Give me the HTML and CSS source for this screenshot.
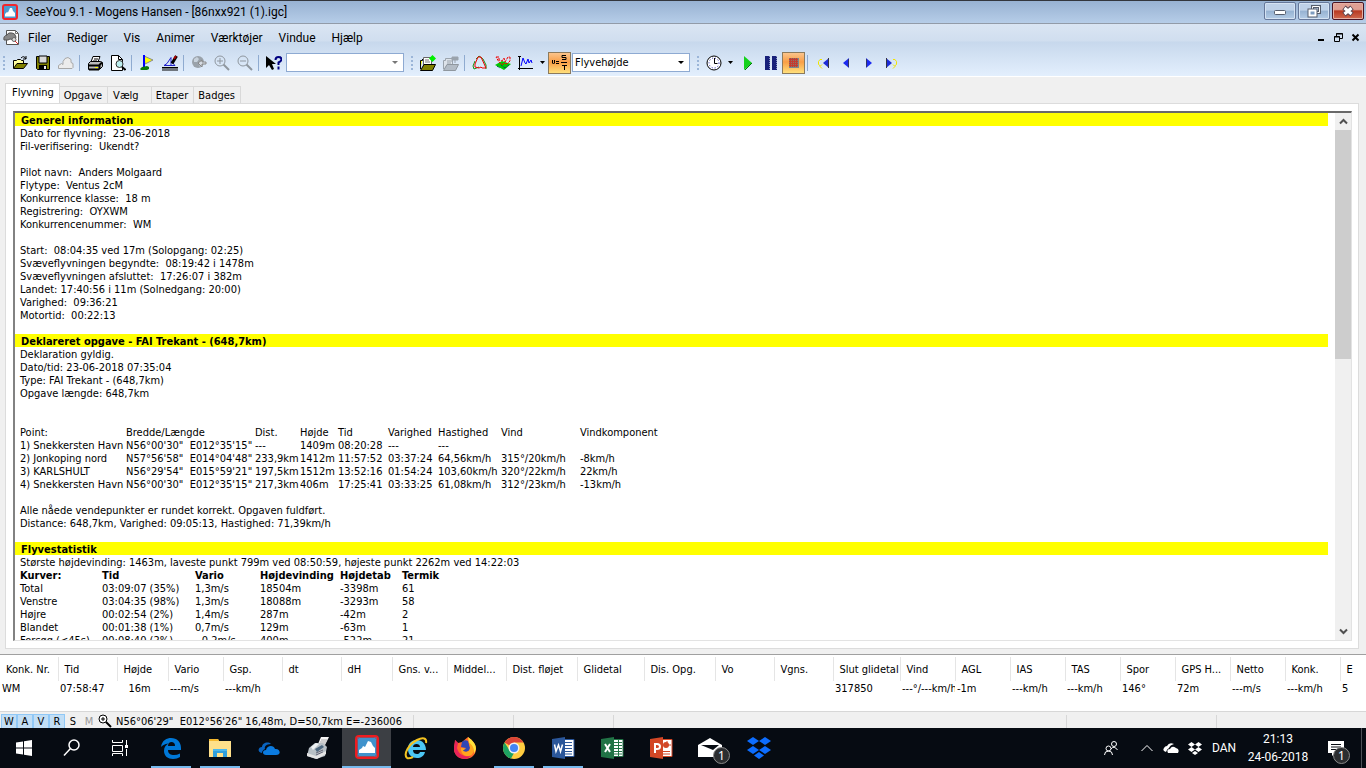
FILE: index.html
```html
<!DOCTYPE html>
<html lang="da">
  <head>
    <meta charset="utf-8">
    <title>SeeYou 9.1 - Mogens Hansen - [86nxx921 (1).igc]</title>
    <link rel="stylesheet" href="styles.css">
  </head>
  <body>
    <header class="titlebar">
      <svg class="app-icon" viewBox="0 0 16 16"><rect x="1" y="1" width="14" height="14" rx="2" fill="#4b9bd0" stroke="#f2262c" stroke-width="2"/><path d="M3 12.500V10l2-2 1 .5L8 4h2l1 3 2 2v3.500z" fill="#fff"/></svg>
      <h1>SeeYou 9.1 - Mogens Hansen - [86nxx921 (1).igc]</h1>
      <div class="win-buttons">
        <button aria-label="Minimer"><svg viewBox="0 0 30 16"><rect x="9.500" y="7.500" width="11" height="4" rx="1" fill="#fff" stroke="#555d6c"/></svg></button>
        <button aria-label="Gendan"><svg viewBox="0 0 30 16"><path d="M13.500 3.500h7v6h-7z" fill="none" stroke="#555d6c" stroke-width="3"/><path d="M13.500 3.500h7v6h-7z" fill="none" stroke="#fff"/><path d="M10.500 7.500h6v5h-6z" fill="#7d9cc0" stroke="#555d6c" stroke-width="4"/><path d="M10.500 7.500h6v5h-6z" fill="#7d9cc0" stroke="#fff" stroke-width="2"/></svg></button>
        <button class="close" aria-label="Luk"><svg viewBox="0 0 30 16"><path d="M11 4.500l8 7m0-7l-8 7" stroke="#5b4650" stroke-width="5"/><path d="M11.500 5l7 6m0-6l-7 6" stroke="#fff" stroke-width="3"/></svg></button>
      </div>
    </header>

    <div class="bars">
      <nav class="menubar">
        <svg class="doc-icon" viewBox="0 0 17 17"><path d="M3.500 1.500h9l3 3v11h-12z" fill="#fff" stroke="#555"/><path d="M12.500 1.500v3h3" fill="none" stroke="#777"/><path d="M1 11q-1-4 3-5 1-3 5-2 3 0 4 4l-1 3-5-1-2 1z" fill="#888" stroke="#555"/><circle cx="11" cy="10.500" r="2" fill="#ddd" stroke="#666"/><path d="M12 12l3 3" stroke="#d22" stroke-width="1"/></svg>
        <a href="#">Filer</a><a href="#">Rediger</a><a href="#">Vis</a><a href="#">Animer</a><a href="#">Værktøjer</a><a href="#">Vindue</a><a href="#">Hjælp</a>
        <div class="mdi-buttons">
          <button aria-label="Minimer dokument"><svg viewBox="0 0 9 9"><path d="M1 7h6" stroke="#000" stroke-width="2"/></svg></button>
          <button aria-label="Gendan dokument"><svg viewBox="0 0 9 9"><path d="M2.500 3V.500h6v5H6M2 1h7M.500 3.500h5v5h-5zM0 4h6" fill="none" stroke="#000"/></svg></button>
          <button aria-label="Luk dokument"><svg viewBox="0 0 9 9"><path d="M1.500 1.500l6 6m0-6l-6 6" stroke="#000" stroke-width="2"/></svg></button>
        </div>
      </nav>

      <div class="toolbar">
        <div class="group">
          <span class="grip"></span>
          <button aria-label="Åbn"><svg viewBox="0 0 16 16"><path d="M1.500 13V5.500h3l1-1h3l1 1h2V8" fill="#ffffa0" stroke="#000"/><path d="M1.500 13.500L5 8.500h10.500l-4 5z" fill="#808000" stroke="#000"/><path d="M9 3q3-3 5 1m0-3v3h-3" fill="none" stroke="#000"/></svg></button>
          <button aria-label="Gem"><svg viewBox="0 0 16 16"><path d="M1.500 1.500h13v13H2.500l-1-1z" fill="#808000" stroke="#000"/><path d="M4 1h8v7H4z" fill="#d8d8d8" stroke="#000"/><path d="M4 10h8v5H4z" fill="#000"/><path d="M9 11h2v3H9z" fill="#eee"/></svg></button>
          <button aria-label="Hent fra sky"><svg viewBox="0 0 16 16"><path d="M.500 13.500v-3l3-2 1.500 1V6.500l2-3 3-1 3 2v3l2 1v4l-1 1z" fill="#ececec" stroke="#a8a8a8"/></svg></button>
          <i class="sep"></i>
          <button aria-label="Udskriv"><svg viewBox="0 0 16 16"><path d="M4 7l2-5.500h7L11 7" fill="#fff" stroke="#000"/><path d="M7 4h4M6 6h4" stroke="#000"/><path d="M1.500 8.500l2-2h10l2 1v4l-3 3h-11z" fill="#bbb" stroke="#000"/><path d="M1 10.500h11l3-3M2 14.500h10M12.500 10v4" fill="none" stroke="#000" stroke-width="2"/><path d="M8 12.500h3" stroke="#ff0"/></svg></button>
          <button aria-label="Vis udskrift"><svg viewBox="0 0 16 16"><path d="M1.500 .500h7l4 4v11h-11z" fill="#fff" stroke="#000"/><path d="M8.500 .500v4h4" fill="none" stroke="#000"/><circle cx="9.500" cy="9" r="3.500" fill="#bdeff0" stroke="#333"/><path d="M12 12l3.500 3" stroke="#000" stroke-width="2"/></svg></button>
          <i class="sep"></i>
          <button aria-label="Flag"><svg viewBox="0 0 16 16"><path d="M5 1l9 4-8 4z" fill="#ff0" stroke="#888"/><path d="M5 0v13" stroke="#00f" stroke-width="2"/><path d="M1 14l2-2 5-1 2 1v2l-2 1H2z" fill="#0a7a0a"/></svg></button>
          <button aria-label="Rediger opgave"><svg viewBox="0 0 16 16"><path d="M0 12.500h16" stroke="#000" stroke-width="1"/><path d="M.500 14.500h16" stroke="#000" stroke-dasharray="1 1" stroke-width="3"/><path d="M2 10.500l3-2 4-6v8zM2 10.500h11L9 6" fill="none" stroke="#22c"/><path d="M14.500 1L10 8.500" stroke="#000" stroke-width="3"/><path d="M14 1l-2 3" stroke="#a00" stroke-width="2"/></svg></button>
          <i class="sep"></i>
          <button aria-label="Globus"><svg viewBox="0 0 16 16"><circle cx="7" cy="7" r="6" fill="#9aa2aa"/><path d="M3 4l3-2 2 2-2 3H3zM8 9h3l-2 3z" fill="#c8d2dc"/><path d="M7 8l4-3v2h4v2h-4v3z" fill="#d6dce4" stroke="#888"/></svg></button>
          <button aria-label="Zoom ind"><svg viewBox="0 0 16 16"><circle cx="6" cy="6" r="5" fill="none" stroke="#8f979f"/><path d="M3 6h6M6 3v6" stroke="#8f979f"/><path d="M9.500 9.500L15 15" stroke="#8f979f" stroke-width="2"/></svg></button>
          <button aria-label="Zoom ud"><svg viewBox="0 0 16 16"><circle cx="6" cy="6" r="5" fill="none" stroke="#8f979f"/><path d="M3 6h6" stroke="#8f979f"/><path d="M9.500 9.500L15 15" stroke="#8f979f" stroke-width="2"/></svg></button>
          <i class="sep"></i>
          <button aria-label="Hjælp"><svg viewBox="0 0 16 16"><path d="M0 1v12l3-3 3 5 2-1-2-5h4z" fill="#000"/><path d="M9.500 5q0-3 3-3 3 0 3 2.500 0 1.500-3 3v2.500M12.500 11.500v3" fill="none" stroke="#000080" stroke-width="2"/></svg></button>
          <span class="combo off"><select aria-label="Vis"><option></option></select></span>
        </div>
        <div class="group">
          <span class="grip"></span>
          <button aria-label="Tilføj flyvning"><svg viewBox="0 0 16 16"><path d="M.500 14V5.500h2V4" fill="#ff0" stroke="#000"/><path d="M3.500 2.500h8v8h-8z" fill="#fff" stroke="#666"/><path d="M5 5h4M5 7h5" stroke="#777"/><path d="M.500 15.500L4 9.500h11.500l-3 6z" fill="#808000" stroke="#000"/><path d="M12.500 0l3.500 3.500-3.500 3.500L9 3.500z" fill="#00f000"/></svg></button>
          <button aria-label="Fjern flyvning"><svg viewBox="0 0 16 16"><path d="M.500 14V5.500h2V3.500h7v6" fill="#dde3ea" stroke="#9aa3ad"/><path d="M9 2h6v3H9zM12 5v3M4 6h5M4 8h4" fill="#9aa3ad" stroke="#9aa3ad"/><path d="M.500 15.500L4 9.500h11.500l-3 6z" fill="#b3bcc6" stroke="#8f979f"/></svg></button>
          <i class="sep"></i>
          <button aria-label="Rute"><svg viewBox="0 0 16 16"><path d="M4 4l3-3 4 3 3 6v4M3 6l-2 5 1 3 5-2" fill="none" stroke="#159015"/><path d="M6 2h3l5 11h-4l-1-1-2 1-4-1V9z" fill="none" stroke="#e00"/></svg></button>
          <button aria-label="3D"><svg viewBox="0 0 16 16"><path d="M0 10l7-4 9 3-7 6z" fill="#00c800"/><path d="M2 11l3 2M6 10l4 3M10 13l4-3" stroke="#055" stroke-dasharray="2 1"/><path d="M1 2h3v3l3 1 2-3 1 4 3-5h2v4l-3 3-3-1-2 2-3-3z" fill="none" stroke="#e00" stroke-dasharray="3 1"/></svg></button>
          <button aria-label="Graf"><svg viewBox="0 0 16 16"><path d="M1.500 1v14M0 13.500h15M0 1.500h3" stroke="#000"/><path d="M3 11l2-8 2 5 1 1 2-5 1 4 2-3 1 3" fill="none" stroke="#00f"/></svg></button>
          <button class="drop" aria-label="Flere grafer"><svg viewBox="0 0 7 4"><path d="M1 0h5L3.500 3z"/></svg></button>
          <button class="pressed" aria-label="Statistik"><svg viewBox="0 0 16 16"><path d="M.500 5v3l1 1 1-1V5M4 6.500h3M4 8.500h3M14 .500h-4v2h4v2h-4M9 7.500h6M10 10.500h5M12.500 10v5" fill="none" stroke="#000"/></svg></button>
          <span class="combo"><select aria-label="Farve"><option>Flyvehøjde</option></select></span>
        </div>
        <div class="group">
          <span class="grip"></span>
          <button aria-label="Tid"><svg viewBox="0 0 16 16"><circle cx="8" cy="8" r="7" fill="#fff" stroke="#000"/><circle cx="8" cy="8" r="5" fill="none" stroke="#22a" stroke-dasharray="1 2"/><path d="M8.500 3v5.500h3" fill="none" stroke="#000"/></svg></button>
          <button class="drop" aria-label="Hastighed"><svg viewBox="0 0 7 4"><path d="M1 0h5L3.500 3z"/></svg></button>
          <button aria-label="Afspil"><svg viewBox="0 0 16 16"><path d="M4 1l8 7-8 7z" fill="#14d21c"/><path d="M5 15l7-7" stroke="#087010"/></svg></button>
          <button aria-label="Pause"><svg viewBox="0 0 16 16"><path d="M2 1h5v14H2zM9 1h5v14H9z" fill="#17207a"/><path d="M6.500 1v14M13.500 1v14" stroke="#8490c0" stroke-dasharray="1 1"/></svg></button>
          <button class="pressed" aria-label="Stop"><svg viewBox="0 0 16 16"><path d="M3 3h10v10H3z" fill="#7d8890"/><path d="M3 3h9v9H3z" fill="#c43a30"/><path d="M3 3.500h9M3 5.500h9M3 7.500h9M3 9.500h9M3 11.500h9" stroke="#8c7468" stroke-dasharray="1 1"/></svg></button>
          <i class="sep"></i>
          <button aria-label="Første"><svg viewBox="0 0 16 16"><path d="M14 3v10L8 8z" fill="#1c2bd8"/><path d="M13.500 3v10" stroke="#334"/><path d="M7 4.500H5l-1.500 2v3l2 1.500M7 9.500l-2 2 2 2" fill="none" stroke="#f0e400"/></svg></button>
          <button aria-label="Forrige"><svg viewBox="0 0 16 16"><path d="M11 3v10L5 8z" fill="#1c2bf0"/><path d="M10.500 4v8" stroke="#336"/></svg></button>
          <button aria-label="Næste"><svg viewBox="0 0 16 16"><path d="M5 3v10l6-5z" fill="#1c2bf0"/><path d="M5.500 4v8" stroke="#336"/></svg></button>
          <button aria-label="Sidste"><svg viewBox="0 0 16 16"><path d="M2 3v10l6-5z" fill="#1c2bd8"/><path d="M2.500 3v10" stroke="#334"/><path d="M9 4.500h2l1.500 2v3l-2 1.500M9 9.500l2 2-2 2" fill="none" stroke="#f0e400"/></svg></button>
        </div>
      </div>
    </div>

    <main>
      <div class="tabs" role="tablist">
        <button role="tab" class="active" aria-selected="true">Flyvning</button><button role="tab">Opgave</button><button role="tab" class="wide">Vælg</button><button role="tab">Etaper</button><button role="tab">Badges</button>
      </div>
      <section class="page">
        <div class="frame">
          <article class="report">
            <h2>Generel information</h2>
            <p>Dato for flyvning:  23-06-2018
Fil-verifisering:  Ukendt?

Pilot navn:  Anders Molgaard
Flytype:  Ventus 2cM
Konkurrence klasse:  18 m
Registrering:  OYXWM
Konkurrencenummer:  WM

Start:  08:04:35 ved 17m (Solopgang: 02:25)
Svæveflyvningen begyndte:  08:19:42 i 1478m
Svæveflyvningen afsluttet:  17:26:07 i 382m
Landet: 17:40:56 i 11m (Solnedgang: 20:00)
Varighed:  09:36:21
Motortid:  00:22:13</p>
            <h2>Deklareret opgave - FAI Trekant - (648,7km)</h2>
            <p>Deklaration gyldig.
Dato/tid: 23-06-2018 07:35:04
Type: FAI Trekant - (648,7km)
Opgave længde: 648,7km</p>
            <table class="points">
              <colgroup><col class="c106"><col class="c129"><col class="c45"><col class="c38"><col class="c50"><col class="c50"><col class="c63"><col class="c79"><col class="c106"></colgroup>
              <thead>
                <tr><th>Point:</th><th>Bredde/Længde</th><th>Dist.</th><th>Højde</th><th>Tid</th><th>Varighed</th><th>Hastighed</th><th>Vind</th><th>Vindkomponent</th></tr>
              </thead>
              <tbody>
                <tr><td>1) Snekkersten Havn</td><td>N56°00'30"  E012°35'15"</td><td>---</td><td>1409m</td><td>08:20:28</td><td>---</td><td>---</td><td></td><td></td></tr>
                <tr><td>2) Jonkoping nord</td><td>N57°56'58"  E014°04'48"</td><td>233,9km</td><td>1412m</td><td>11:57:52</td><td>03:37:24</td><td>64,56km/h</td><td>315°/20km/h</td><td>-8km/h</td></tr>
                <tr><td>3) KARLSHULT</td><td>N56°29'54"  E015°59'21"</td><td>197,5km</td><td>1512m</td><td>13:52:16</td><td>01:54:24</td><td>103,60km/h</td><td>320°/22km/h</td><td>22km/h</td></tr>
                <tr><td>4) Snekkersten Havn</td><td>N56°00'30"  E012°35'15"</td><td>217,3km</td><td>406m</td><td>17:25:41</td><td>03:33:25</td><td>61,08km/h</td><td>312°/23km/h</td><td>-13km/h</td></tr>
              </tbody>
            </table>
            <p>Alle nåede vendepunkter er rundet korrekt. Opgaven fuldført.
Distance: 648,7km, Varighed: 09:05:13, Hastighed: 71,39km/h</p>
            <h2>Flyvestatistik</h2>
            <p class="tight">Største højdevinding: 1463m, laveste punkt 799m ved 08:50:59, højeste punkt 2262m ved 14:22:03</p>
            <table class="stats">
              <colgroup><col class="c82"><col class="c93"><col class="c65"><col class="c80"><col class="c62"><col class="c62"></colgroup>
              <thead>
                <tr><th>Kurver:</th><th>Tid</th><th>Vario</th><th>Højdevinding</th><th>Højdetab</th><th>Termik</th></tr>
              </thead>
              <tbody>
                <tr><td>Total</td><td>03:09:07 (35%)</td><td>1,3m/s</td><td>18504m</td><td>-3398m</td><td>61</td></tr>
                <tr><td>Venstre</td><td>03:04:35 (98%)</td><td>1,3m/s</td><td>18088m</td><td>-3293m</td><td>58</td></tr>
                <tr><td>Højre</td><td>00:02:54 (2%)</td><td>1,4m/s</td><td>287m</td><td>-42m</td><td>2</td></tr>
                <tr><td>Blandet</td><td>00:01:38 (1%)</td><td>0,7m/s</td><td>129m</td><td>-63m</td><td>1</td></tr>
                <tr><td>Forsøg (&lt;45s)</td><td>00:08:40 (2%)</td><td> -0,2m/s</td><td>400m</td><td>-522m</td><td>21</td></tr>
              </tbody>
            </table>
          </article>
          <div class="scroll">
            <button aria-label="Rul op"><svg viewBox="0 0 9 7"><path d="M1 5.500l3.500-3.500L8 5.500" fill="none" stroke="#505050" stroke-width="2"/></svg></button>
            <div class="thumb"></div>
            <button aria-label="Rul ned"><svg viewBox="0 0 9 7"><path d="M1 1.500L4.500 5 8 1.500" fill="none" stroke="#505050" stroke-width="2"/></svg></button>
          </div>
        </div>
      </section>
    </main>

    <section class="pilots">
      <table>
        <colgroup><col class="c58"><col class="c59"><col class="c51"><col class="c55"><col class="c59"><col class="c59"><col class="c51"><col class="c55"><col class="c59"><col class="c71"><col class="c67"><col class="c71"><col class="c59"><col class="c59"><col class="c67"><col class="c55"><col class="c55"><col class="c55"><col class="c55"><col class="c55"><col class="c55"><col class="c55"><col class="c55"><col></colgroup>
        <thead>
          <tr><th>Konk. Nr.</th><th>Tid</th><th>Højde</th><th>Vario</th><th>Gsp.</th><th>dt</th><th>dH</th><th>Gns. v...</th><th>Middel...</th><th>Dist. fløjet</th><th>Glidetal</th><th>Dis. Opg.</th><th>Vo</th><th>Vgns.</th><th>Slut glidetal</th><th>Vind</th><th>AGL</th><th>IAS</th><th>TAS</th><th>Spor</th><th>GPS H...</th><th>Netto</th><th>Konk.</th><th>E</th></tr>
        </thead>
        <tbody>
          <tr><td>WM</td><td>07:58:47</td><td>   16m</td><td>---m/s</td><td>---km/h</td><td></td><td></td><td></td><td></td><td></td><td></td><td></td><td></td><td></td><td>317850</td><td>---°/---km/h</td><td>-1m</td><td>---km/h</td><td>---km/h</td><td>146°</td><td>72m</td><td>---m/s</td><td>---km/h</td><td>5</td></tr>
        </tbody>
      </table>
    </section>

    <footer class="status">
      <div class="toggles"><button class="on">W</button><button class="on">A</button><button class="on">V</button><button class="on">R</button><button>S</button><button disabled>M</button></div>
      <svg class="lens" viewBox="0 0 14 14"><circle cx="5" cy="5" r="4" fill="#fff" stroke="#000"/><path d="M3 5h4M5 3v4" stroke="#000"/><path d="M8 8l5 5" stroke="#000" stroke-width="2"/></svg>
      <span class="pos">N56°06'29"  E012°56'26" 16,48m, D=50,7km E=-236006</span>
      <span class="cell"></span><span class="cell"></span><span class="cell fill"></span><span class="cell mid"></span><span class="cell mid"></span>
    </footer>

    <div class="taskbar">
      <button class="sys" aria-label="Start"><svg viewBox="0 0 24 24"><path d="M4 6.500l7-1v6H4zM12 5.300l8-1.300v7.500h-8zM4 12.500h7v6l-7-1zM12 12.500h8V20l-8-1.300z" fill="#fff"/></svg></button>
      <button class="sys" aria-label="Søg"><svg viewBox="0 0 24 24"><circle cx="14" cy="9" r="5" fill="none" stroke="#fff" stroke-width="1.500"/><path d="M10.500 12.500L4 19.500" stroke="#fff" stroke-width="1.500"/></svg></button>
      <button class="sys" aria-label="Opgavevisning"><svg viewBox="0 0 24 24"><path d="M4.500 4v2.500h10V4M4.500 9.500h10v6h-10zM4.500 20v-2.500h10V20M18.500 4v5M18.500 13v7" fill="none" stroke="#fff"/><path d="M17 9h3v3h-3z" fill="#fff"/></svg></button>
      <button class="open" aria-label="Edge"><svg viewBox="0 0 24 24"><path d="M2 11C3 4 8 2 12 2c6 0 10 4 10 10v2H9c0 4 3 5 6 5 2 0 4-.5 6-1.500V21c-2 1-4 2-7 2-5 0-9-3-9-8 0-4 2-6 4.500-7.500C5.500 8 3 9.500 2 11zm7-1h7c0-3-1.500-4-3.500-4S9 7.500 9 10z" fill="#0078d7"/></svg></button>
      <button class="open" aria-label="Stifinder"><svg viewBox="0 0 24 24"><path d="M1 3h9l1 2h12v16H1z" fill="#ffe08a"/><path d="M1 3h9l1 2H1z" fill="#f5b82e"/><path d="M5 21v-8h14v8h-4v-4H9v4z" fill="#2f9fdc"/><path d="M5 13h14v2H5z" fill="#4bb8ee"/></svg></button>
      <button aria-label="OneDrive"><svg viewBox="0 0 24 24"><path d="M5 17c-5-1-4-6 0-6 0-4 6-6 9-3-5 0-7 3-6 5-2 1-3 2-3 4z" fill="#0a64c0"/><path d="M9 19c-4 0-4-5 0-5 1-5 8-5 9-1 5-1 7 6 1 6z" fill="#0a7be0"/></svg></button>
      <button aria-label="Fax"><svg viewBox="0 0 24 24"><path d="M12 8l3-7h8l-5 10z" fill="#f5f5f5"/><path d="M15 4h6M14 6h6M13 8h6" stroke="#aaa"/><path d="M3 12l6-5h8l4 4-2 9-9 3-9-3z" fill="#b8c0c6"/><path d="M5 11l5-4 3 1-6 6z" fill="#edf2f4"/><path d="M9 13l7-4 2 2-7 5z" fill="#4c6880"/><path d="M10 17l7-3M10 19l7-3" stroke="#667"/><path d="M1 17l9 3 10-5v3l-9 5-10-3z" fill="#e4e4e4"/></svg></button>
      <button class="current" aria-label="SeeYou"><svg viewBox="0 0 24 24"><rect x="1" y="1" width="22" height="22" rx="3" fill="#3f92cc" stroke="#f01c20" stroke-width="2"/><rect x="2.500" y="2.500" width="19" height="19" rx="2" fill="none" stroke="#9c4758"/><path d="M4 18v-3l3-2 1-2 2 1 3-6 3 1 2 4 2 2v5z" fill="#fff"/></svg></button>
      <button aria-label="Internet Explorer"><svg viewBox="0 0 24 24"><path d="M21 16c-1 4-4 6-8 6-5 0-9-3-9-9s4-9 9-9 9 4 9 10H9c0 3 2 4 4 4 1.500 0 2.500-.5 3-2zM9 11h7c0-2-1.500-3-3.500-3S9 9 9 11z" fill="#4cc7f4"/><path d="M3 22C-1 18 5 8 13 4c6-3 10-2 9 3M3 22c2 1 4 0 6-1" fill="none" stroke="#f4c321" stroke-width="2"/></svg></button>
      <button aria-label="Firefox"><svg viewBox="0 0 24 24"><path d="M2 4l3 3 4-1 6-5c2 2 8 5 8 12 0 6-5 10-11 10S1 19 1 13c0-4 1-6 1-9z" fill="#ff6a2a"/><path d="M2 4l3 3-1 5c2 8 9 9 14 8-2 2-4 3-6 3C6 23 1 19 1 13c0-4 1-6 1-9z" fill="#e8225a"/><path d="M9 6c2-2 4-2 6-1l2 7c0 4-6 5-8 2l4-2-5-1z" fill="#3147b5"/><path d="M15 1c2 2 8 5 8 12l-2 5c0-6-2-8-5-11z" fill="#ffe23a"/><path d="M8 12l5 .500-3 2c3 3 7 1 7-3l-1-5c5 4 6 8 3 12-5 4-12 0-11-7z" fill="#ffa51e"/></svg></button>
      <button class="open" aria-label="Chrome"><svg viewBox="0 0 24 24"><circle cx="12" cy="12" r="11" fill="#ffcd40"/><path d="M12 12L2.500 6.500A11 11 0 0 1 21.500 6.500H12z" fill="#db4437"/><path d="M2.500 6.500L8 15l4 2-3 5.600A11 11 0 0 1 2.500 6.500z" fill="#1da362"/><circle cx="12" cy="12" r="5.500" fill="#f1f1f1"/><circle cx="12" cy="12" r="4" fill="#4285f4"/></svg></button>
      <button class="open" aria-label="Word"><svg viewBox="0 0 24 24"><path d="M13 3.500h10v17H13z" fill="#fff" stroke="#2b579a"/><path d="M14 6.500h7M14 9.500h7M14 12.500h7M14 15.500h7M14 18h7" stroke="#2b579a"/><path d="M1 3l13-2v22L1 21z" fill="#2b579a"/><path d="M3.500 8.500l1.500 7L7.500 9l2 6.500 2-7" fill="none" stroke="#fff" stroke-width="1.500"/></svg></button>
      <button aria-label="Excel"><svg viewBox="0 0 24 24"><path d="M13 3.500h10v17H13z" fill="#fff" stroke="#217346"/><path d="M14 6.500h8M14 9.500h8M14 12.500h8M14 15.500h8M14 18h8M18.500 4v16" stroke="#217346"/><path d="M1 3l13-2v22L1 21z" fill="#217346"/><path d="M5 8l5 8M10 8l-5 8" stroke="#fff" stroke-width="2"/></svg></button>
      <button aria-label="PowerPoint"><svg viewBox="0 0 24 24"><path d="M13 3.500h10v17H13z" fill="#fff" stroke="#d24726"/><path d="M14 15.500h7M14 18h7" stroke="#d24726"/><circle cx="17" cy="9" r="3" fill="#d24726"/><path d="M18 5v4h4" fill="none" stroke="#d24726"/><path d="M1 3l13-2v22L1 21z" fill="#d24726"/><path d="M6 17V8h2q3 0 3 2.500T8 13H6" fill="none" stroke="#fff" stroke-width="2"/></svg></button>
      <button aria-label="Mail"><svg viewBox="0 0 24 24"><path d="M0 9l12-7 12 7v12H0z" fill="#fff"/><path d="M3 9h18l-6 5z" fill="#060b12"/></svg><span class="badge">1</span></button>
      <button aria-label="Dropbox"><svg viewBox="0 0 24 24"><path d="M6 1l6 4-6 4-6-4zM18 1l6 4-6 4-6-4zM6 10l6 4-6 4-6-4zM18 10l6 4-6 4-6-4zM12 16l5 3.500-5 3.500-5-3.500z" fill="#0d6dff"/></svg></button>

      <div class="tray">
        <button class="people" aria-label="Personer"><svg viewBox="0 0 16 16"><circle cx="11" cy="4" r="2.500" fill="none" stroke="#fff"/><path d="M8 9q3-4 6.500 1" fill="none" stroke="#fff"/><circle cx="5.500" cy="8.500" r="2.500" fill="none" stroke="#fff"/><path d="M1.500 15q0-4 4-4t4 4" fill="none" stroke="#fff"/></svg></button>
        <button aria-label="Vis skjulte ikoner"><svg viewBox="0 0 16 16"><path d="M2.500 11L8 5.500l5.500 5.500" fill="none" stroke="#fff"/></svg></button>
        <button aria-label="OneDrive status"><svg viewBox="0 0 16 16"><path d="M3 12q-4-1-2-4 1-2 3-2 2-4 7-2-4 1-5 4-2 1-3 4z" fill="#fff"/><path d="M5 13q-2-4 2-4 2-4 6-1 4 1 2 5z" fill="#fff"/></svg></button>
        <button aria-label="Dropbox status"><svg viewBox="0 0 16 16"><path d="M4.500 2L8 4.500 4.500 7 1 4.500zM11.500 2L15 4.500 11.500 7 8 4.500zM4.500 7L8 9.500 4.500 12 1 9.500zM11.500 7L15 9.500 11.500 12 8 9.500zM8 11l3 2-3 2-3-2z" fill="#fff"/></svg></button>
        <span class="lang">DAN</span>
        <time datetime="2018-06-24T21:13">21:13<br>24-06-2018</time>
        <button class="notes" aria-label="Meddelelser"><svg viewBox="0 0 16 16"><path d="M0 1h16v12H7l-3 3v-3H0z" fill="#fff"/><path d="M3 4.500h10M3 7h10M3 9.500h7" stroke="#060b12"/></svg><span class="badge">1</span></button>
      </div>
    </div>
  </body>
</html>
```
FILE: styles.css
```css
* { box-sizing: border-box; }
body {
  display: flex; flex-direction: column;
  height: 100vh; margin: 0; overflow: hidden;
  background: #f0f0f0; color: #000;
  font: 11px/13px "DejaVu Sans Condensed", "DejaVu Sans", Tahoma, sans-serif;
}
button { margin: 0; padding: 0; border: 0; background: none; color: inherit; font: inherit; }
a { color: inherit; text-decoration: none; }
svg { display: block; }
table { border-collapse: collapse; table-layout: fixed; }
th, td { padding: 0; text-align: left; font-weight: normal; white-space: pre; }

/* title bar */
.titlebar { display: flex; flex: none; align-items: center; height: 24px; padding-left: 2px; border-top: 1px solid #33363c; border-bottom: 1px solid #929ba8; background: linear-gradient(#98b2d2, #b6cde8); }
.titlebar h1 { flex: 1; margin: 0 0 0 8px; font: 12px/16px Roboto, "Segoe UI", sans-serif; }
.app-icon { width: 16px; height: 16px; }
.win-buttons { display: flex; align-self: flex-start; gap: 2px; padding: 1px 2px 0 0; }
.win-buttons button { width: 32px; height: 18px; border: 1px solid #66789a; border-radius: 2px; background: linear-gradient(#bed1e8 45%, #96b2d2 50%, #b4cce6); box-shadow: inset 0 0 0 1px #d4e2f2; }
.win-buttons svg { width: 30px; height: 16px; }
.win-buttons .close { border-color: #4a1424; background: linear-gradient(#e0a094 40%, #b83a22 50%, #d06a50); box-shadow: inset 0 0 0 1px #e4b0a4; }

/* menu and toolbar */
.bars { flex: none; border-bottom: 1px solid #fff; background: linear-gradient(#dae5f3, #d0deef 17px, #c7d8ec 18px, #e3effd); }
.menubar { display: flex; align-items: center; height: 27px; padding-left: 3px; font: 12px/16px Roboto, "Segoe UI", sans-serif; }
.menubar a { padding: 0 8px; }
.doc-icon { width: 17px; height: 17px; }
.mdi-buttons { display: flex; gap: 8px; margin-left: auto; padding-right: 6px; }
.mdi-buttons svg { width: 9px; height: 9px; }
.toolbar { display: flex; gap: 4px; height: 25px; }
.group { display: flex; align-items: center; height: 23px; }
.group button { width: 23px; height: 22px; }
.group button svg { width: 16px; height: 16px; margin: auto; }
.group .drop { width: 11px; }
.group .drop svg { width: 7px; height: 4px; }
.group .pressed { border: 1px solid #8c7a5c; background: linear-gradient(#fbc48c, #f89e46 45%, #ffe07c); }
.grip { width: 2px; height: 14px; margin: 0 3px; background: repeating-linear-gradient(#9bb5d8 0 2px, transparent 2px 4px); }
.sep { width: 1px; height: 16px; margin: 0 3px 0 2px; background: #8fabd0; }
.combo { position: relative; width: 118px; height: 19px; margin-left: 1px; }
.combo select { width: 100%; height: 100%; padding: 0 2px; border: 1px solid #8eaad2; border-radius: 0; background: #fff; color: #000; font: inherit; appearance: none; }
.combo::after { content: ""; position: absolute; top: 8px; right: 6px; border: 3px solid transparent; border-top-color: #000; border-bottom: 0; }
.combo.off::after { border-top-color: #777; }

/* tabs */
main { display: flex; flex: 1; flex-direction: column; min-height: 0; padding: 6px 7px 5px 5px; }
.tabs { display: flex; align-items: flex-end; height: 20px; }
.tabs button { height: 17px; padding: 0 5px 0 4px; border: 1px solid #d9d9d9; border-width: 1px 1px 0 0; }
.tabs .active { height: 21px; margin-bottom: -1px; padding: 0 5px 3px 6px; border-left-width: 1px; background: #fff; }
.tabs .wide { padding: 0 12px 0 5px; }
.page { display: flex; flex: 1; min-height: 0; padding: 7px 6px 7px 7px; border: 1px solid #dcdcdc; background: #fff; }
.frame { display: flex; flex: 1; min-width: 0; border: 1px solid #e3e3e3; border-top: 2px solid #696969; border-left: 2px solid #828282; }
.report { flex: 1; min-width: 0; overflow: hidden; margin-right: 7px; }
.report h2 { height: 13px; margin: 0 0 1px; padding-left: 6px; background: #ff0; font: bold 11px/15px "DejaVu Sans Condensed", "DejaVu Sans", Tahoma, sans-serif; }
.report p { margin: 0 0 12px; padding-left: 5px; white-space: pre; }
.report p.tight { margin: 0; }
.report table { margin-left: 5px; }
.report .points { width: 666px; margin: 26px 0 13px 5px; }
.stats { width: 444px; }
.stats th { font-weight: bold; }

.scroll { display: flex; flex: none; flex-direction: column; width: 16px; background: #f0f0f0; }
.scroll button { width: 16px; height: 17px; }
.scroll svg { width: 9px; height: 7px; margin: auto; }
.thumb { flex: none; height: 229px; margin-bottom: auto; background: #cdcdcd; }

/* live values */
.pilots { flex: none; height: 57px; overflow: hidden; border-top: 1px solid #a0a0a0; background: #fff; }
.pilots table { width: 100%; margin-top: 2px; }
.pilots th { height: 24px; padding-left: 6px; border-right: 1px solid #e5e5e5; }
.pilots th:last-child { border-right: 0; }
.pilots td { height: 15px; padding-left: 2px; overflow: hidden; }

.c38 { width: 38px; }
.c45 { width: 45px; }
.c50 { width: 50px; }
.c51 { width: 51px; }
.c55 { width: 55px; }
.c58 { width: 58px; }
.c59 { width: 59px; }
.c62 { width: 62px; }
.c63 { width: 63px; }
.c65 { width: 65px; }
.c67 { width: 67px; }
.c71 { width: 71px; }
.c79 { width: 79px; }
.c80 { width: 80px; }
.c82 { width: 82px; }
.c93 { width: 93px; }
.c106 { width: 106px; }
.c129 { width: 129px; }

/* status bar */
.status { display: flex; flex: none; align-items: center; height: 17px; padding: 2px 0 0 1px; border-top: 1px solid #d7d7d7; white-space: pre; }
.toggles { display: flex; }
.toggles button { width: 16px; height: 14px; }
.toggles .on { border: 1px solid #90c8f6; border-bottom: 0; background: #c2def5; }
.toggles :disabled { color: #9a9a9a; }
.lens { width: 14px; height: 14px; margin: 0 4px 0 1px; }
.pos { width: 297px; }
.cell { width: 100px; height: 13px; border-left: 1px solid #d7d7d7; }
.cell.fill { flex: 1; }
.cell.mid { width: 150px; }

/* task bar */
.taskbar { display: flex; flex: none; height: 40px; background: #060b12; color: #fff; }
.taskbar button { position: relative; width: 49px; height: 40px; }
.taskbar svg { width: 24px; height: 24px; margin: auto; }
.taskbar .sys { width: 48px; }
.taskbar .sys + .open { margin-left: 2px; }
.taskbar .open { background: linear-gradient(#76b9ed, #76b9ed) center bottom / 40px 2px no-repeat; }
.taskbar .current { border-bottom: 2px solid #76b9ed; background: #3c3f44; }
.badge { position: absolute; right: 4px; bottom: 4px; width: 17px; height: 17px; border: 1px solid #8a8a8a; border-radius: 50%; background: #2b2d30; font: 12px/15px "Noto Sans", sans-serif; text-align: center; }
.tray { display: flex; align-items: center; margin-left: auto; padding-right: 4px; font: 12px/18px Roboto, "Segoe UI", sans-serif; }
.taskbar .tray button { width: 24px; }
.taskbar .tray svg { width: 16px; height: 16px; }
.taskbar .tray .people { margin-right: 12px; }
.lang { width: 34px; padding-left: 5px; }
.tray time { width: 74px; text-align: center; }
.taskbar .tray .notes { width: 47px; padding-right: 5px; border-right: 1px solid #4c5056; }
.notes .badge { right: 11px; }
```
